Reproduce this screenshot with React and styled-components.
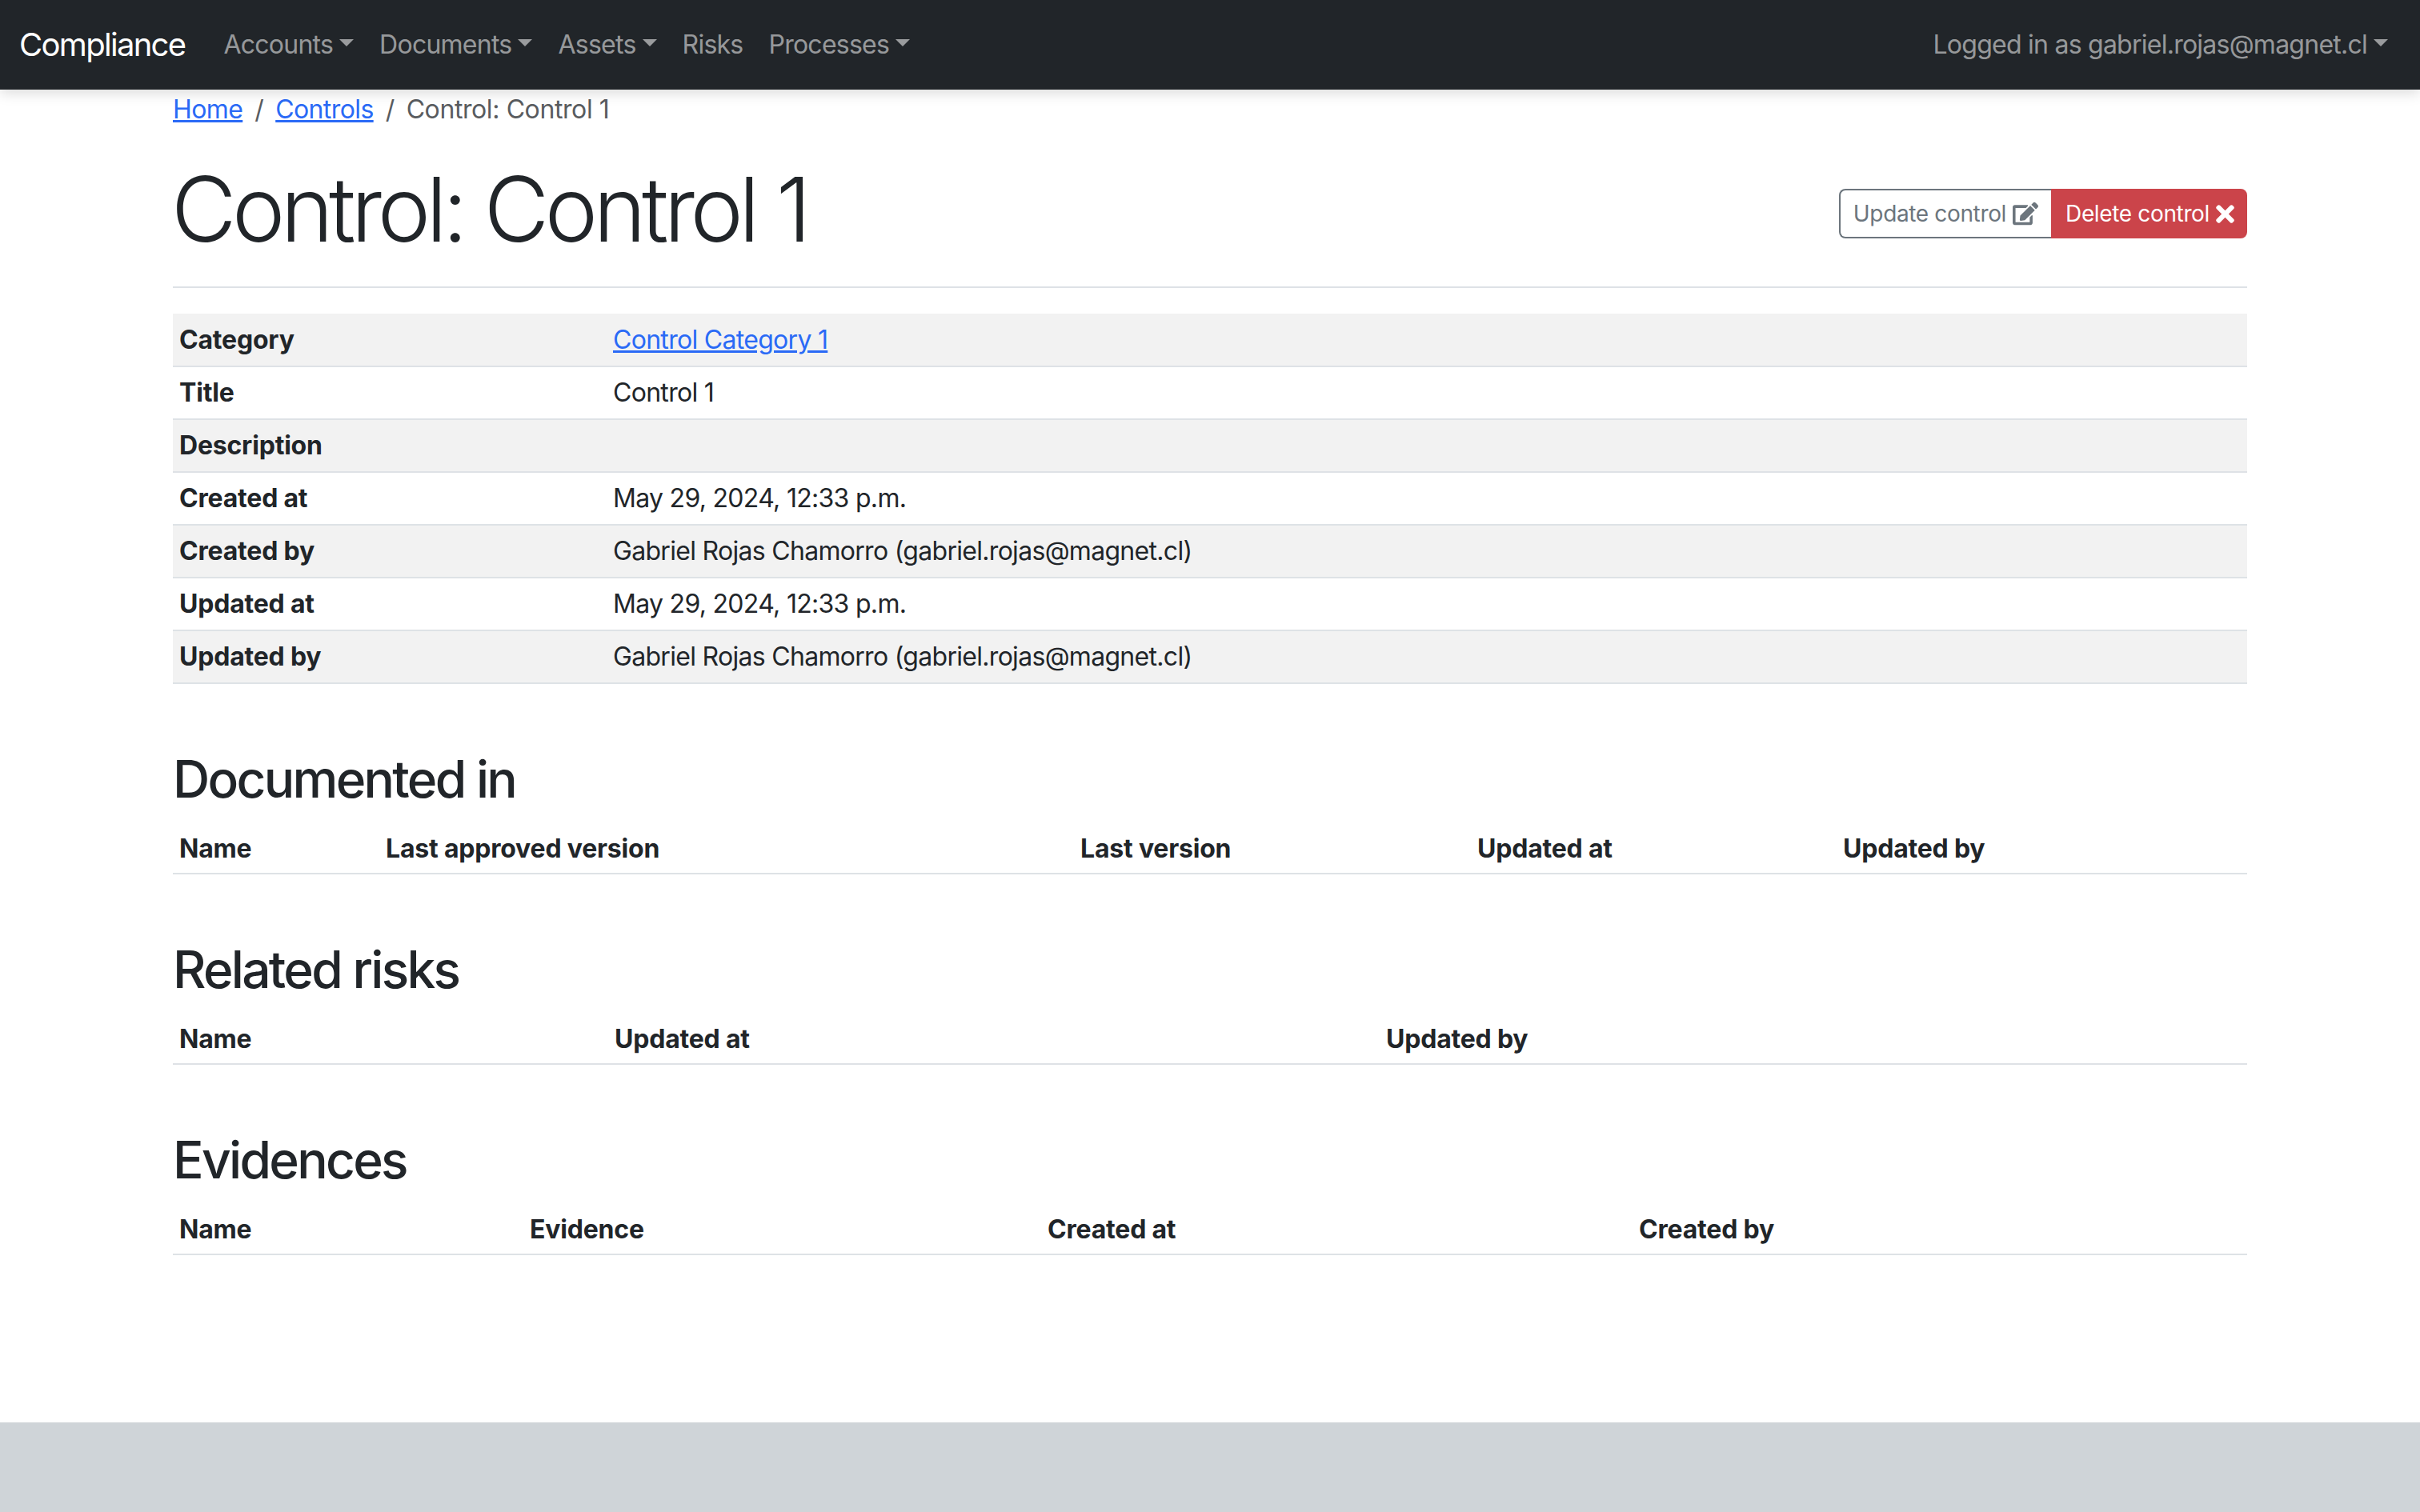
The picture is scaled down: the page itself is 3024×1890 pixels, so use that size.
import React from "react";
import styled, { createGlobalStyle } from "styled-components";
import { FaEdit, FaTimes } from "react-icons/fa";

const GlobalStyle = createGlobalStyle`
  html, body {
    margin: 0;
    padding: 0;
    background: #fff;
  }
  body {
    font-family: Inter, "Liberation Sans", sans-serif;
    font-size: 32px;
    line-height: 48px;
    letter-spacing: -0.7px;
    color: #212529;
  }
  * {
    box-sizing: border-box;
  }
`;

const Page = styled.div`
  display: flex;
  flex-direction: column;
  min-height: 1890px;
`;

const Navbar = styled.nav`
  display: flex;
  align-items: center;
  height: 112px;
  padding: 0 24px;
  background: #212529;
  box-shadow: 0 4px 16px rgba(0, 0, 0, 0.15);
  position: relative;
`;

const Brand = styled.a`
  font-size: 40px;
  letter-spacing: -1.7px;
  color: #fff;
  margin-right: 32px;
  white-space: nowrap;
`;

const NavLink = styled.a`
  display: flex;
  align-items: center;
  padding: 0 16px;
  color: rgba(255, 255, 255, 0.55);
  letter-spacing: -0.75px;
  white-space: nowrap;
  ${(p) => p.$right && "margin-left: auto;"}
`;

const Caret = styled.span`
  display: inline-block;
  margin-left: 8px;
  margin-bottom: 6px;
  border-top: 9.6px solid currentColor;
  border-left: 9.6px solid transparent;
  border-right: 9.6px solid transparent;
`;

const Main = styled.main`
  flex: 1;
  width: 2592px;
  margin: 0 auto;
`;

const Breadcrumb = styled.div`
  display: flex;
  height: 50px;
  color: #595c5f;
  padding-top: 1px;
  letter-spacing: -0.6px;
`;

const Crumb = styled.a`
  color: #2a6af6;
  text-decoration: underline;
`;

const Current = styled.span`
  color: #595c5f;
  letter-spacing: -0.4px;
`;

const Slash = styled.span`
  padding: 0 15px;
`;

const TitleRow = styled.div`
  display: flex;
  align-items: center;
  justify-content: space-between;
  padding-top: 32px;
  padding-bottom: 30px;
  border-bottom: 2px solid #dee2e6;
  margin-bottom: 32px;
`;

const Title = styled.h1`
  margin: 0 0 0 -2px;
  font-size: 112px;
  line-height: 134px;
  font-weight: 300;
  letter-spacing: -5.6px;
`;

const ButtonGroup = styled.div`
  display: flex;
  margin-top: 12px;
`;

const Button = styled.a`
  display: flex;
  align-items: center;
  gap: 8px;
  height: 62px;
  padding: ${(p) => (p.$danger ? "0 14px 0 16px" : "0 16px")};
  font-size: 28px;
  letter-spacing: -0.35px;
  border: 2px solid ${(p) => (p.$danger ? "#cb444a" : "#6c757d")};
  background: ${(p) => (p.$danger ? "#cb444a" : "#fff")};
  color: ${(p) => (p.$danger ? "#fff" : "#6c757d")};
  border-radius: ${(p) => (p.$danger ? "0 8px 8px 0" : "8px 0 0 8px")};
  ${(p) => !p.$danger && "border-right: 0;"}
`;

const CloseIcon = styled(FaTimes)`
  width: 23px;
  height: 33px;
`;

const Table = styled.table`
  width: 100%;
  table-layout: fixed;
  border-collapse: collapse;
  margin-bottom: 32px;
`;

const Row = styled.tr`
  background: ${(p) => (p.$striped ? "#f2f2f2" : "transparent")};
`;

const HeadCell = styled.th`
  height: 66px;
  padding: ${(p) => (p.$column ? "10px 8px 6px" : "8px")};
  font-weight: 700;
  letter-spacing: -0.2px;
  text-align: left;
  border-bottom: 2px solid #dee2e6;
`;

const Cell = styled.td`
  height: 66px;
  padding: 8px;
  border-bottom: 2px solid #dee2e6;
`;

const SectionTitle = styled.h3`
  margin: 80px 0 14px;
  font-size: 64px;
  line-height: 77px;
  font-weight: 500;
  letter-spacing: -2.7px;
`;

const Footer = styled.footer`
  height: 112px;
  background: #cfd4d8;
`;

const details = [
  ["Category", <Crumb key="c">Control Category 1</Crumb>],
  ["Title", "Control 1"],
  ["Description", ""],
  ["Created at", "May 29, 2024, 12:33 p.m."],
  ["Created by", "Gabriel Rojas Chamorro (gabriel.rojas@magnet.cl)"],
  ["Updated at", "May 29, 2024, 12:33 p.m."],
  ["Updated by", "Gabriel Rojas Chamorro (gabriel.rojas@magnet.cl)"],
];

const sections = [
  {
    title: "Documented in",
    columns: [["Name", 258], ["Last approved version", 868], ["Last version", 496], ["Updated at", 457], ["Updated by", 513]],
  },
  {
    title: "Related risks",
    columns: [["Name", 544], ["Updated at", 964], ["Updated by", 1084]],
  },
  {
    title: "Evidences",
    columns: [["Name", 438], ["Evidence", 647], ["Created at", 739], ["Created by", 768]],
  },
];

const menu = [
  ["Accounts", true],
  ["Documents", true],
  ["Assets", true],
  ["Risks", false],
  ["Processes", true],
];

export default function App() {
  return (
    <Page>
      <GlobalStyle />
      <Navbar>
        <Brand>Compliance</Brand>
        {menu.map(([label, caret]) => (
          <NavLink key={label}>
            {label}
            {caret && <Caret />}
          </NavLink>
        ))}
        <NavLink $right>
          Logged in as gabriel.rojas@magnet.cl
          <Caret />
        </NavLink>
      </Navbar>
      <Main>
        <Breadcrumb>
          <Crumb>Home</Crumb>
          <Slash>/</Slash>
          <Crumb>Controls</Crumb>
          <Slash>/</Slash>
          <Current>Control: Control 1</Current>
        </Breadcrumb>
        <TitleRow>
          <Title>Control: Control 1</Title>
          <ButtonGroup>
            <Button>
              Update control <FaEdit size={32} />
            </Button>
            <Button $danger>
              Delete control <CloseIcon />
            </Button>
          </ButtonGroup>
        </TitleRow>
        <Table>
          <colgroup>
            <col width={542} />
            <col />
          </colgroup>
          <tbody>
            {details.map(([label, value], i) => (
              <Row key={label} $striped={i % 2 === 0}>
                <HeadCell>{label}</HeadCell>
                <Cell>{value}</Cell>
              </Row>
            ))}
          </tbody>
        </Table>
        {sections.map((section) => (
          <section key={section.title}>
            <SectionTitle>{section.title}</SectionTitle>
            <Table>
              <colgroup>
                {section.columns.map(([name, width]) => (
                  <col key={name} width={width} />
                ))}
              </colgroup>
              <thead>
                <tr>
                  {section.columns.map(([name]) => (
                    <HeadCell key={name} $column>{name}</HeadCell>
                  ))}
                </tr>
              </thead>
            </Table>
          </section>
        ))}
      </Main>
      <Footer />
    </Page>
  );
}
